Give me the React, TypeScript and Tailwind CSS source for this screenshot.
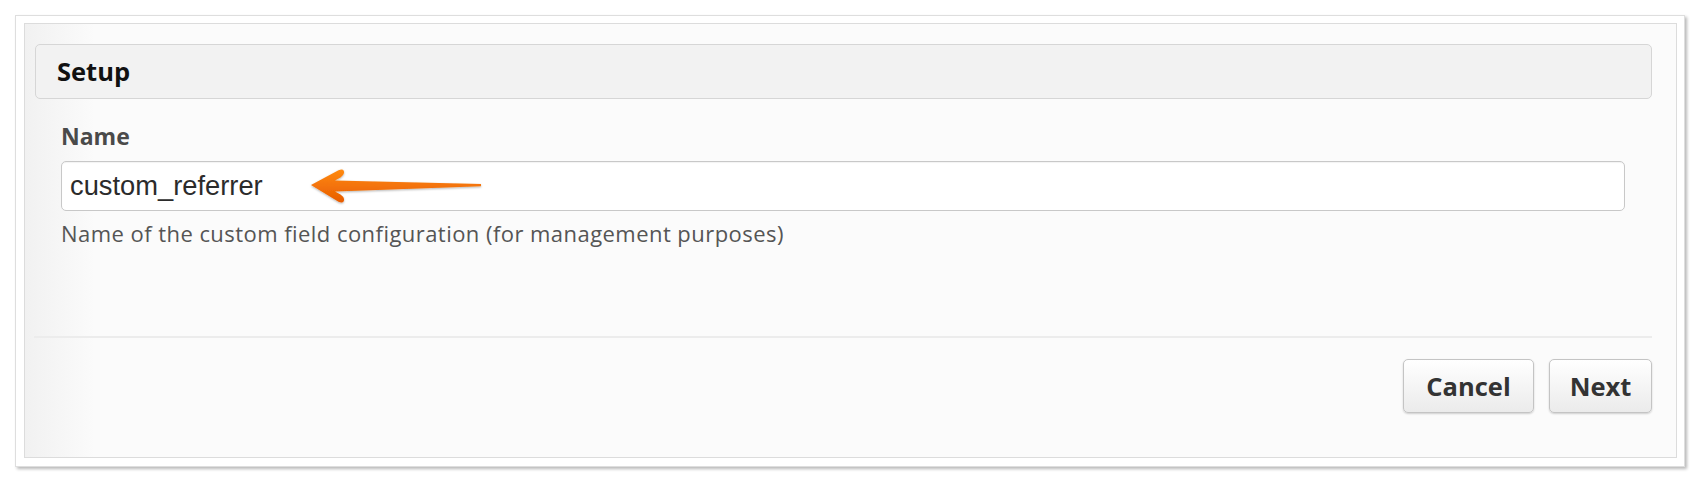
import React from "react";

function Arrow() {
  return (
    <svg
      className="absolute left-[239px] top-[-2px] pointer-events-none"
      width="186"
      height="50"
      viewBox="0 0 186 50"
    >
      <defs>
        <linearGradient id="ag" x1="0" y1="0" x2="0" y2="1">
          <stop offset="0" stopColor="#ff8a12" />
          <stop offset="1" stopColor="#e85c00" />
        </linearGradient>
        <filter id="sh" x="-10%" y="-30%" width="120%" height="160%">
          <feDropShadow dx="0" dy="1" stdDeviation="0.8" floodColor="#000" floodOpacity="0.3" />
        </filter>
      </defs>
      <path
        d="M11 26 L38.5 11.2 Q44.5 8.8 44 14 Q43.5 16.5 40.5 18.5 L35 21.5 L181 25 L181 27.3 L35 32.5 L40.5 35.5 Q43.5 37.5 44 40 Q44.5 45 38.5 42.8 Z"
        fill="url(#ag)"
        filter="url(#sh)"
      />
    </svg>
  );
}

export default function App() {
  return (
    <div className="w-[1700px] h-[482px] bg-white pt-[15px] pl-[15px] font-['Open_Sans',sans-serif]">
      <div className="w-[1670px] h-[452px] border border-[#dedede] bg-white pt-[7px] pl-[8px] pr-[7px] pb-[8px] shadow-[2px_2px_3px_rgba(0,0,0,0.28)]">
        <div className="h-full border border-[#dcdcdc] bg-[linear-gradient(to_right,#f1f1f1_0px,#fbfbfb_70px,#fbfbfb_100%)] pt-[20px] pl-[10px] pr-[24px] flex flex-col">
          <div className="h-[55px] border border-[#d6d6d6] rounded-[5px] bg-[#f2f2f2] flex items-center pl-[21px]">
            <span className="text-[25.5px] font-bold text-[#111]">Setup</span>
          </div>
          <div className="h-[237px] pl-[26px] pr-[27px] pt-[22px] flex flex-col">
            <div className="text-[23px] leading-[30px] font-bold text-[#4a4a4a]">Name</div>
            <div className="relative mt-[10px]">
              <input
                readOnly
                value="custom_referrer"
                className="w-full h-[50px] border border-[#c8c8c8] rounded-[5px] bg-white pl-[8px] text-[27.3px] text-[#2b2b2b] font-['Liberation_Sans',Arial,sans-serif] outline-none shadow-[inset_0_1px_1px_rgba(0,0,0,0.05)]"
              />
              <Arrow />
            </div>
            <div className="mt-[7px] text-[22px] leading-[30px] tracking-[0.45px] text-[#555]">
              Name of the custom field configuration (for management purposes)
            </div>
          </div>
          <div className="h-[2px] bg-[#ececec] -ml-px"></div>
          <div className="flex justify-end gap-[15px] pt-[21px]">
            <button className="w-[131px] h-[54px] rounded-[5px] border border-[#c4c4c4] bg-[linear-gradient(to_bottom,#ffffff,#ebebeb)] shadow-[0_1px_2px_rgba(0,0,0,0.18)] text-[25.5px] font-bold text-[#333]">
              Cancel
            </button>
            <button className="w-[103px] h-[54px] rounded-[5px] border border-[#c4c4c4] bg-[linear-gradient(to_bottom,#ffffff,#ebebeb)] shadow-[0_1px_2px_rgba(0,0,0,0.18)] text-[25.5px] font-bold text-[#333]">
              Next
            </button>
          </div>
        </div>
      </div>
    </div>
  );
}
